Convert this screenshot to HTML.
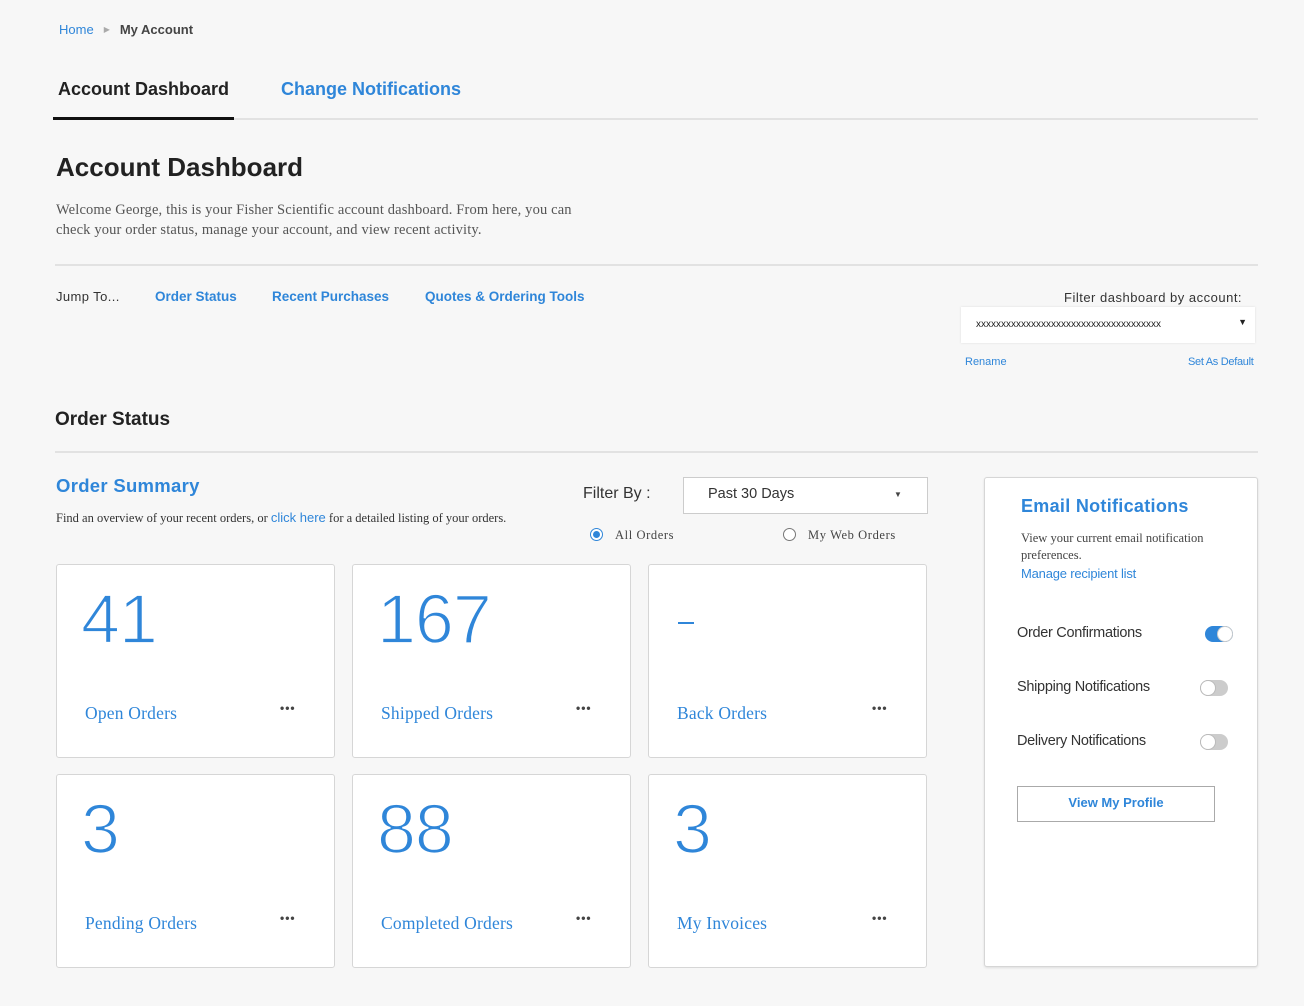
<!DOCTYPE html>
<html><head><meta charset="utf-8"><style>
*{box-sizing:border-box;margin:0;padding:0}
body{width:1304px;height:1006px;background:#f7f7f7;font-family:"Liberation Sans",sans-serif;position:relative;overflow:hidden;color:#222}
.a{position:absolute}
.blue{color:#2f86d9}
.serif{font-family:"Liberation Serif",serif}
.card{position:absolute;width:279px;height:194px;background:#fff;border:1px solid #d6d6d6;border-radius:3px}
.card .n{position:absolute;left:24px;top:14px;font-size:70px;color:#2f86d9;font-weight:normal;letter-spacing:-1px;-webkit-text-stroke:1.8px #fff}
.card .l{position:absolute;left:28px;top:138px;font-family:"Liberation Serif",serif;font-size:17.5px;color:#2f86d9;letter-spacing:.2px}
.card .d{position:absolute;left:223px;top:136px;font-size:12px;color:#444;font-weight:bold;letter-spacing:1px}
.tog{position:absolute;width:28px;height:16px;border-radius:8px;background:#ccc}
.tog i{position:absolute;top:0;width:16px;height:16px;border-radius:50%;background:#fff;border:1px solid #bbb}
</style></head><body>
<div class="a" style="left:59px;top:22px;font-size:13px"><span class="blue">Home</span><span style="color:#aaa;font-size:8px;margin:0 10px;position:relative;top:-2px">&#9654;</span><b style="color:#444">My Account</b></div>
<div class="a" style="left:58px;top:79px;font-size:18px;font-weight:bold;color:#222">Account Dashboard</div>
<div class="a blue" style="left:281px;top:79px;font-size:18px;font-weight:bold">Change Notifications</div>
<div class="a" style="left:53px;top:118px;width:1205px;height:2px;background:#e2e2e2"></div>
<div class="a" style="left:53px;top:117px;width:181px;height:3px;background:#111"></div>
<div class="a" style="left:56px;top:152px;font-size:26px;font-weight:bold">Account Dashboard</div>
<div class="a serif" style="left:56px;top:200px;font-size:14.5px;color:#555;line-height:20px;width:540px;letter-spacing:.15px">Welcome George, this is your Fisher Scientific account dashboard. From here, you can check your order status, manage your account, and view recent activity.</div>
<div class="a" style="left:55px;top:264px;width:1203px;height:2px;background:#e2e2e2"></div>
<div class="a" style="left:56px;top:289px;font-size:13px;color:#333;letter-spacing:.4px">Jump To...</div>
<div class="a blue" style="left:155px;top:289px;font-size:13.5px;font-weight:bold">Order Status</div>
<div class="a blue" style="left:272px;top:289px;font-size:13.5px;font-weight:bold">Recent Purchases</div>
<div class="a blue" style="left:425px;top:289px;font-size:13.5px;font-weight:bold">Quotes &amp; Ordering Tools</div>
<div class="a" style="left:1064px;top:290px;font-size:13px;color:#333;letter-spacing:.5px">Filter dashboard by account:</div>
<div class="a" style="left:961px;top:307px;width:294px;height:36px;background:#fff;box-shadow:0 0 2px #ddd"><span class="a" style="left:15px;top:12px;font-size:10px;color:#222">xxxxxxxxxxxxxxxxxxxxxxxxxxxxxxxxxxxxx</span><span class="a" style="right:8px;top:10px;font-size:9px">&#9660;</span></div>
<div class="a blue" style="left:965px;top:356px;font-size:11px">Rename</div>
<div class="a blue" style="left:1188px;top:356px;font-size:11px;letter-spacing:-.3px">Set As Default</div>
<div class="a" style="left:55px;top:409px;font-size:19px;font-weight:bold">Order Status</div>
<div class="a" style="left:55px;top:451px;width:1203px;height:2px;background:#e2e2e2"></div>
<div class="a blue" style="left:56px;top:475px;font-size:18.5px;font-weight:bold;letter-spacing:.3px">Order Summary</div>
<div class="a serif" style="left:56px;top:510px;font-size:12.5px;color:#333">Find an overview of your recent orders, or <span class="blue" style="font-family:'Liberation Sans';font-size:13px">click here</span> for a detailed listing of your orders.</div>
<div class="a" style="left:583px;top:485px;font-size:16px;color:#333">Filter By :</div>
<div class="a" style="left:683px;top:477px;width:245px;height:37px;background:#fff;border:1px solid #ccc"><span class="a" style="left:24px;top:8px;font-size:14.5px;color:#333">Past 30 Days</span><span class="a" style="left:210px;top:12px;font-size:8px;color:#444">&#9660;</span></div>
<div class="a" style="left:590px;top:528px;width:13px;height:13px;border-radius:50%;border:1px solid #2f86d9;background:#fff"><div style="margin:2px;width:7px;height:7px;border-radius:50%;background:#2f86d9"></div></div>
<div class="a serif" style="left:615px;top:528px;font-size:12.5px;color:#444;letter-spacing:.6px">All Orders</div>
<div class="a" style="left:783px;top:528px;width:13px;height:13px;border-radius:50%;border:1px solid #777;background:#fff"></div>
<div class="a serif" style="left:808px;top:528px;font-size:12.5px;color:#444;letter-spacing:.6px">My Web Orders</div>

<div class="card" style="left:56px;top:564px"><div class="n">41</div><div class="l">Open Orders</div><div class="d">•••</div></div>
<div class="card" style="left:352px;top:564px"><div class="n">167</div><div class="l">Shipped Orders</div><div class="d">•••</div></div>
<div class="card" style="left:648px;top:564px"><div class="a" style="left:29px;top:57px;width:16px;height:2px;background:#2f86d9"></div><div class="l">Back Orders</div><div class="d">•••</div></div>
<div class="card" style="left:56px;top:774px"><div class="n">3</div><div class="l">Pending Orders</div><div class="d">•••</div></div>
<div class="card" style="left:352px;top:774px"><div class="n">88</div><div class="l">Completed Orders</div><div class="d">•••</div></div>
<div class="card" style="left:648px;top:774px"><div class="n">3</div><div class="l">My Invoices</div><div class="d">•••</div></div>

<div class="a" style="left:984px;top:477px;width:274px;height:490px;background:#fff;border:1px solid #d6d6d6;border-radius:3px;box-shadow:0 1px 2px #ddd">
<div class="a blue" style="left:36px;top:18px;font-size:18px;font-weight:bold;letter-spacing:.3px">Email Notifications</div>
<div class="a serif" style="left:36px;top:52px;font-size:12.5px;color:#444;line-height:17px;width:210px">View your current email notification preferences.</div>
<div class="a blue" style="left:36px;top:88px;font-size:13px;letter-spacing:-.2px">Manage recipient list</div>
<div class="a" style="left:32px;top:147px;font-size:14.5px;color:#333;letter-spacing:-.3px">Order Confirmations</div>
<div class="tog" style="left:220px;top:148px;background:#2f86d9"><i style="left:12px;border-color:#ccc"></i></div>
<div class="a" style="left:32px;top:201px;font-size:14.5px;color:#333;letter-spacing:-.3px">Shipping Notifications</div>
<div class="tog" style="left:215px;top:202px"><i style="left:0"></i></div>
<div class="a" style="left:32px;top:255px;font-size:14.5px;color:#333;letter-spacing:-.3px">Delivery Notifications</div>
<div class="tog" style="left:215px;top:256px"><i style="left:0"></i></div>
<div class="a" style="left:32px;top:308px;width:198px;height:36px;border:1px solid #aaa;text-align:center;line-height:32px;font-size:13px;font-weight:bold" ><span class="blue">View My Profile</span></div>
</div>
</body></html>
